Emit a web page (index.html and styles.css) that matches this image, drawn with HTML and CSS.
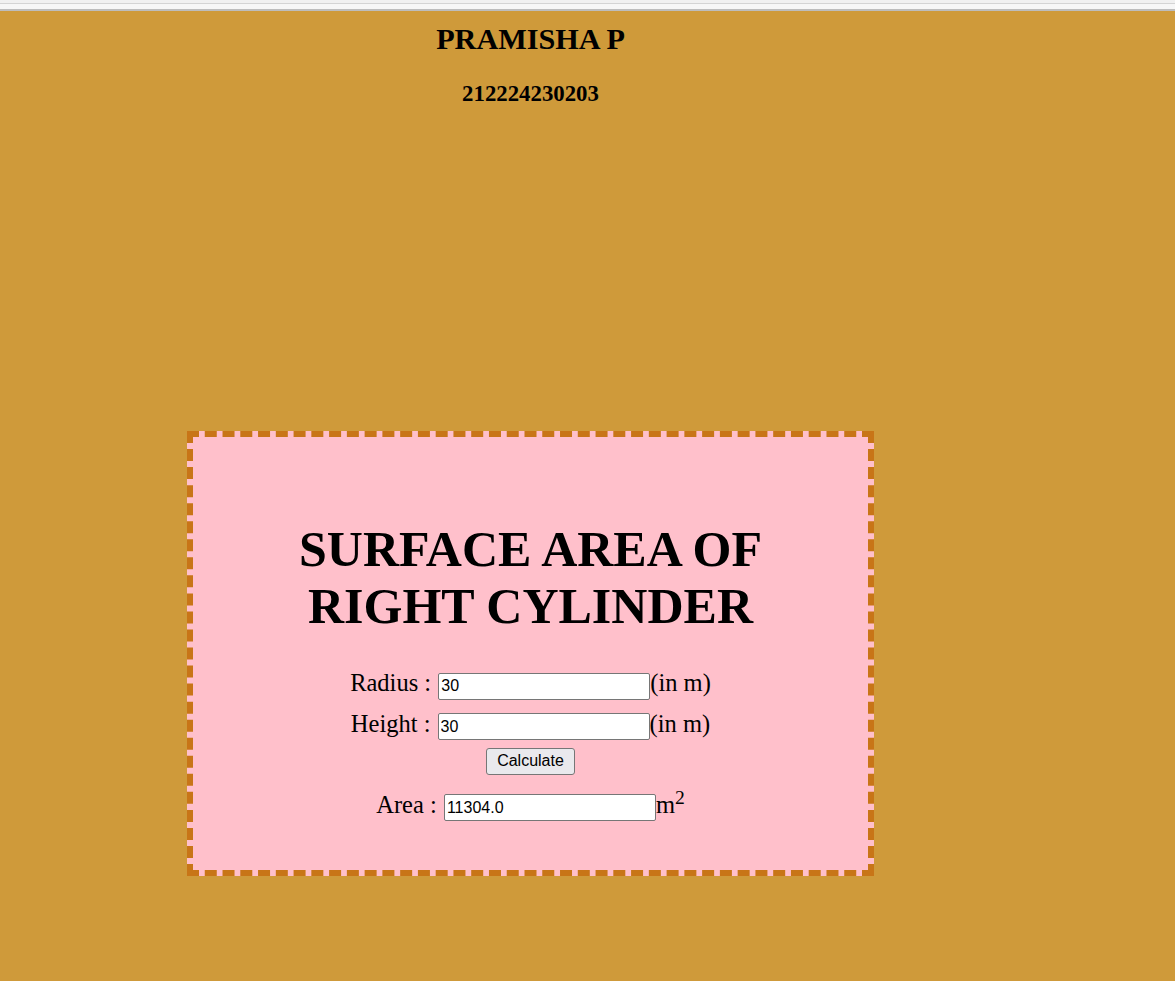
FILE: index.html
```html
<!DOCTYPE html>
<html lang="en">
<head>
<meta charset="utf-8">
<title>Surface Area of Right Cylinder</title>
<link rel="stylesheet" href="styles.css">
</head>
<body>
<div class="topbar"></div>
<div class="page">
  <header class="header">
    <h1 class="name">PRAMISHA P</h1>
    <h2 class="regno">212224230203</h2>
  </header>
  <main class="card">
    <h1 class="title">SURFACE AREA OF<br>RIGHT CYLINDER</h1>
    <form class="form">
      <div class="row">Radius : <input class="field" type="text" value="30">(in m)</div>
      <div class="row row2">Height : <input class="field" type="text" value="30">(in m)</div>
      <div class="row btnrow"><button type="button" class="btn">Calculate</button></div>
      <div class="row arearow">Area : <input class="field" type="text" value="11304.0">m<sup class="sq">2</sup></div>
    </form>
  </main>
</div>
</body>
</html>
```
FILE: styles.css
```css
html {
  background: #cf9a3a;
}
body {
  margin: 0;
  font-family: "Liberation Serif", "Times New Roman", serif;
  color: #000;
}
.topbar {
  height: 11px;
  background: linear-gradient(to bottom,
    #f1f1f1 0, #f1f1f1 3px,
    #d4d4d4 3px, #d4d4d4 4px,
    #f7f7f7 4px, #f7f7f7 9px,
    #bdbdbd 9px, #bdbdbd 11px);
}
.page {
  width: 687px;
  margin-left: 187px;
}
.header {
  text-align: center;
  padding-top: 11px;
}
.name {
  font-size: 30.2px;
  font-weight: bold;
  line-height: 34px;
  margin: 0;
}
.regno {
  font-size: 22.8px;
  font-weight: bold;
  line-height: 26px;
  margin: 25px 0 0;
}
.card {
  box-sizing: border-box;
  margin-top: 324px;
  width: 687px;
  height: 445px;
  background: #ffc0cb;
  border: 6px dashed #c87517;
  text-align: center;
  padding-top: 84px;
}
.title {
  font-size: 50px;
  line-height: 57px;
  font-weight: bold;
  margin: 0 0 34px;
}
.form {
  margin: 0;
}
.row {
  font-size: 24.5px;
  line-height: 28px;
  margin-bottom: 10px;
}
.row2 {
  margin-bottom: 4px;
}
.field {
  box-sizing: border-box;
  width: 212px;
  height: 27px;
  margin: 0 0 0 1px;
  padding: 1px 2px;
  font-family: "Liberation Sans", Arial, sans-serif;
  font-size: 16px;
  border: 1px solid #767676;
  border-radius: 2px;
  background: #fff;
  color: #000;
  vertical-align: baseline;
}
.btnrow {
  margin-bottom: 16px;
}
.btn {
  box-sizing: border-box;
  width: 89px;
  height: 27px;
  font-family: "Liberation Sans", Arial, sans-serif;
  font-size: 16px;
  color: #000;
  background: #e9e9ed;
  border: 1px solid #767676;
  border-radius: 3px;
  padding: 0;
  margin: 0;
}
.sq {
  font-size: 0.8em;
  line-height: 0;
}
```
